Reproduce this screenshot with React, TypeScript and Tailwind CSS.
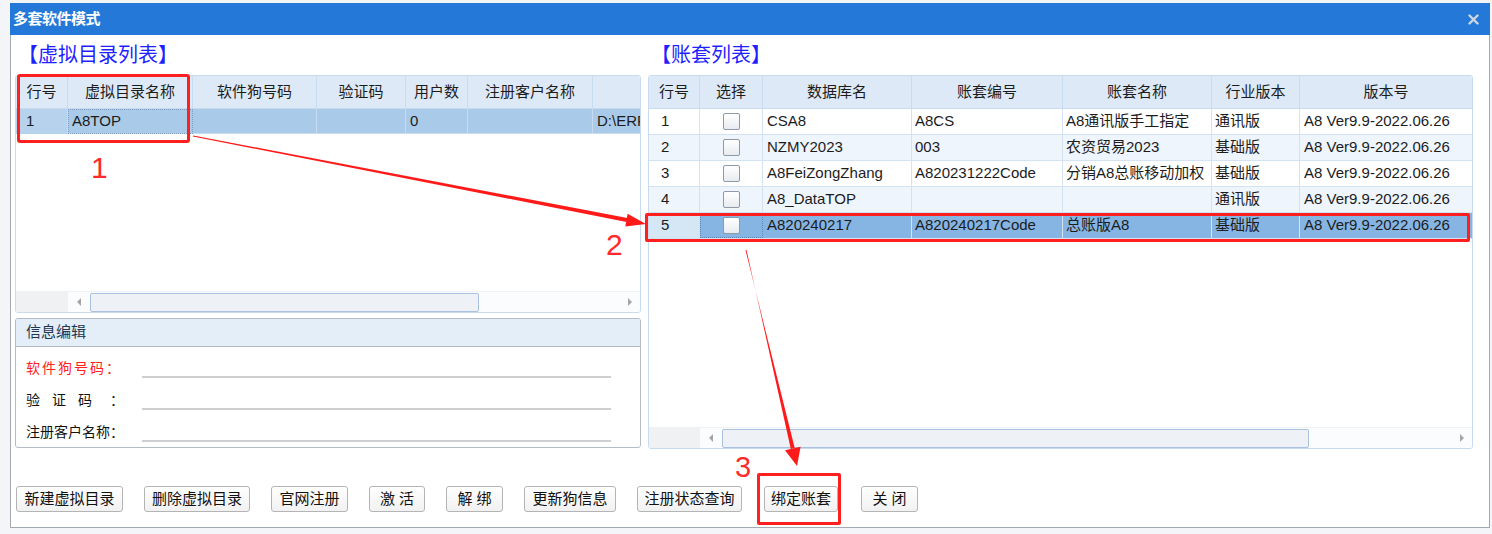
import React from "react";

const leftCols = "grid grid-cols-[52px_125px_124px_89px_62px_125px_1fr]";
const rightCols = "grid grid-cols-[51px_63px_149px_151px_149px_88px_1fr]";

const rightRows = [
  ["1", "CSA8", "A8CS", "A8通讯版手工指定", "通讯版", "A8 Ver9.9-2022.06.26"],
  ["2", "NZMY2023", "003", "农资贸易2023", "基础版", "A8 Ver9.9-2022.06.26"],
  ["3", "A8FeiZongZhang", "A820231222Code", "分销A8总账移动加权", "基础版", "A8 Ver9.9-2022.06.26"],
  ["4", "A8_DataTOP", "", "", "通讯版", "A8 Ver9.9-2022.06.26"],
  ["5", "A820240217", "A820240217Code", "总账版A8", "基础版", "A8 Ver9.9-2022.06.26"],
];

function HeadCell({ children }: { children?: React.ReactNode }) {
  return (
    <div className="flex items-center justify-center border-r border-[#c9dbef] whitespace-nowrap overflow-hidden">
      {children}
    </div>
  );
}

function Checkbox() {
  return (
    <div className="w-[17px] h-[17px] rounded-[2px] border border-[#8e9aa8] bg-gradient-to-b from-[#ffffff] to-[#e8ecf0]" />
  );
}

function ScrollBar({ corner, thumb }: { corner: string; thumb: string }) {
  return (
    <div className="h-[21px] flex shrink-0">
      <div className={`${corner} bg-[#f0f1f2]`} />
      <div className="flex-1 flex items-center bg-[#fbfcfd] border-t border-[#eef2f6]">
        <div className="w-[22px] flex items-center justify-center">
          <div className="w-0 h-0 border-y-[4px] border-y-transparent border-r-[4px] border-r-[#a6a6a6]" />
        </div>
        <div className={`${thumb} h-[19px] rounded-[2px] border border-[#a9c0de] bg-[#eef2f6]`} />
        <div className="flex-1" />
        <div className="w-[20px] flex items-center justify-center">
          <div className="w-0 h-0 border-y-[4px] border-y-transparent border-l-[4px] border-l-[#a6a6a6]" />
        </div>
      </div>
    </div>
  );
}

function Btn({ children, w }: { children: React.ReactNode; w: string }) {
  return (
    <div
      className={`${w} h-[26px] flex items-center justify-center rounded-[3px] border border-[#b4b4b4] bg-gradient-to-b from-[#ffffff] to-[#f1f1f1] text-[15px] text-[#111] whitespace-pre`}
    >
      {children}
    </div>
  );
}

export default function App() {
  return (
    <div className="relative w-[1492px] h-[534px] overflow-hidden bg-[#f3f5f8] pl-[10px] pt-[3px] font-['Liberation_Sans','Noto_Sans_CJK_SC',sans-serif]">
      <div className="w-[1480px] h-[525px] flex flex-col bg-white border-x border-b border-[#a3a9b0]">
        {/* Title bar */}
        <div className="h-[32px] shrink-0 bg-[#2479d8] flex items-center justify-between pl-[3px] pr-[11px] -mx-px">
          <span className="text-[15px] font-bold text-white tracking-[-0.5px]">多套软件模式</span>
          <svg width="11" height="11" viewBox="0 0 11 11">
            <path d="M1.5 1.5 L9.5 9.5 M9.5 1.5 L1.5 9.5" stroke="#cdd7e3" strokeWidth="2.4" strokeLinecap="round" />
          </svg>
        </div>

        {/* Body */}
        <div className="flex-1 flex flex-col pl-[4px] pr-[16px]">
          <div className="flex gap-[7px]">
            {/* Left column */}
            <div className="w-[626px] flex flex-col">
              <div className="h-[40px] flex items-center pl-[3px] text-[20px] text-[#1f1fff]">【虚拟目录列表】</div>
              <div className="h-[238px] flex flex-col border border-[#c9dbef] rounded-[3px] overflow-hidden bg-white text-[15px] text-[#1c1c1c]">
                <div className={`${leftCols} h-[33px] shrink-0 bg-[#dde9f7] border-b border-[#c9dbef]`}>
                  <HeadCell>行号</HeadCell>
                  <HeadCell>虚拟目录名称</HeadCell>
                  <HeadCell>软件狗号码</HeadCell>
                  <HeadCell>验证码</HeadCell>
                  <HeadCell>用户数</HeadCell>
                  <HeadCell>注册客户名称</HeadCell>
                  <div />
                </div>
                <div className={`${leftCols} h-[25px] shrink-0 bg-[#a9cbe9] border-b border-[#c9dbef]`}>
                  <div className="flex items-center pl-[10px] bg-[#b6d2ec] border-r border-[#c9dbef]">1</div>
                  <div className="flex items-center pl-[3px] border border-dotted border-[#7d9cc0]">A8TOP</div>
                  <div className="border-r border-[#c9dbef]" />
                  <div className="border-r border-[#c9dbef]" />
                  <div className="flex items-center pl-[4px] border-r border-[#c9dbef]">0</div>
                  <div className="border-r border-[#c9dbef]" />
                  <div className="flex items-center pl-[4px] whitespace-nowrap overflow-hidden">D:\ERP</div>
                </div>
                <div className="flex-1" />
                <ScrollBar corner="w-[52px]" thumb="w-[389px]" />
              </div>

              {/* Info panel */}
              <div className="mt-[5px] h-[130px] flex flex-col border border-[#b6bcc4] rounded-[3px] overflow-hidden">
                <div className="h-[28px] shrink-0 flex items-center pl-[10px] bg-[#e3eef9] border-b border-[#b0b8c2] text-[15px] text-[#22374f]">
                  信息编辑
                </div>
                <div className="flex-1 flex flex-col text-[14px]">
                  <div className="h-[31px] flex items-end">
                    <div className="w-[126px] pl-[10px] leading-[20px] text-[#ff2020] tracking-[2px]">软件狗号码：</div>
                    <div className="flex-1 mr-[29px] h-[2px] bg-[#cfcfcf]" />
                  </div>
                  <div className="h-[32px] flex items-end">
                    <div className="w-[126px] pl-[10px] leading-[20px] text-[#111]">
                      <div className="w-[98px] flex justify-between">
                        <span>验</span>
                        <span>证</span>
                        <span>码</span>
                        <span className="pl-[6px]">：</span>
                      </div>
                    </div>
                    <div className="flex-1 mr-[29px] h-[2px] bg-[#cfcfcf]" />
                  </div>
                  <div className="h-[32px] flex items-end">
                    <div className="w-[126px] pl-[10px] leading-[20px] text-[#111] whitespace-nowrap">注册客户名称：</div>
                    <div className="flex-1 mr-[29px] h-[2px] bg-[#cfcfcf]" />
                  </div>
                </div>
              </div>
            </div>

            {/* Right column */}
            <div className="w-[825px] flex flex-col">
              <div className="h-[40px] flex items-center pl-[3px] text-[20px] text-[#1f1fff]">【账套列表】</div>
              <div className="h-[374px] flex flex-col border border-[#c9dbef] rounded-[3px] overflow-hidden bg-white text-[15px] text-[#1c1c1c]">
                <div className={`${rightCols} h-[33px] shrink-0 bg-[#dde9f7] border-b border-[#c9dbef]`}>
                  <HeadCell>行号</HeadCell>
                  <HeadCell>选择</HeadCell>
                  <HeadCell>数据库名</HeadCell>
                  <HeadCell>账套编号</HeadCell>
                  <HeadCell>账套名称</HeadCell>
                  <HeadCell>行业版本</HeadCell>
                  <div className="flex items-center justify-center">版本号</div>
                </div>
                {rightRows.map((r, i) => {
                  const sel = i === 4;
                  const rowBg = sel ? "bg-[#86b5e3]" : i % 2 === 1 ? "bg-[#eef5fd]" : "bg-white";
                  return (
                    <div key={i} className={`${rightCols} h-[26px] shrink-0 ${rowBg} border-b border-[#d3e3f3]`}>
                      <div className={`flex items-center pl-[12px] border-r border-[#d3e3f3] ${sel ? "bg-[#d5e6f4]" : ""}`}>{r[0]}</div>
                      <div className={`flex items-center justify-center ${sel ? "border border-dotted border-[#5d86b4]" : "border-r border-[#d3e3f3]"}`}>
                        <Checkbox />
                      </div>
                      <div className="flex items-center pl-[4px] border-r border-[#d3e3f3] whitespace-nowrap overflow-hidden">{r[1]}</div>
                      <div className="flex items-center pl-[3px] border-r border-[#d3e3f3] whitespace-nowrap overflow-hidden">{r[2]}</div>
                      <div className="flex items-center pl-[3px] border-r border-[#d3e3f3] whitespace-nowrap overflow-hidden">{r[3]}</div>
                      <div className="flex items-center pl-[3px] border-r border-[#d3e3f3] whitespace-nowrap overflow-hidden">{r[4]}</div>
                      <div className="flex items-center pl-[4px] whitespace-nowrap overflow-hidden">{r[5]}</div>
                    </div>
                  );
                })}
                <div className="flex-1" />
                <ScrollBar corner="w-[51px]" thumb="w-[587px]" />
              </div>
            </div>
          </div>

          {/* Buttons */}
          <div className="mt-[37px] pl-[1px] flex gap-[21px]">
            <Btn w="w-[107px]">新建虚拟目录</Btn>
            <Btn w="w-[106px]">删除虚拟目录</Btn>
            <Btn w="w-[77px]">官网注册</Btn>
            <Btn w="w-[56px]">激 活</Btn>
            <Btn w="w-[57px]">解 绑</Btn>
            <Btn w="w-[92px]">更新狗信息</Btn>
            <Btn w="w-[105px]">注册状态查询</Btn>
            <div className="ml-[1px]">
              <Btn w="w-[74px]">绑定账套</Btn>
            </div>
            <div className="ml-[2px]">
              <Btn w="w-[57px]">关 闭</Btn>
            </div>
          </div>
        </div>
      </div>

      {/* Red annotations overlay */}
      <div className="absolute left-[17px] top-[74px] w-[173px] h-[69px] border-[3px] border-[#ff1f1f] rounded-[3px]" />
      <div className="absolute left-[645px] top-[213px] w-[825px] h-[29px] border-[3px] border-[#ff1f1f] rounded-[2px]" />
      <div className="absolute left-[757px] top-[473px] w-[84px] h-[52px] border-[3px] border-[#ff1f1f] rounded-[2px]" />
      <div className="absolute left-[91px] top-[153px] text-[30px] leading-none text-[#ff2b2b]">1</div>
      <div className="absolute left-[606px] top-[230px] text-[30px] leading-none text-[#ff2b2b]">2</div>
      <div className="absolute left-[735px] top-[453px] text-[29px] leading-none text-[#ff2b2b]">3</div>
      <svg className="absolute left-0 top-0 pointer-events-none" width="1492" height="534" viewBox="0 0 1492 534">
        <polygon points="193.1,135.5 627.4,218.0 626.6,222.0 192.9,136.5" fill="#ff1a1a" />
        <polygon points="646,224 625.3,226.6 627.6,213.8" fill="#ff1a1a" />
        <polygon points="745.5,250.1 794.7,448.0 790.8,449.0 746.5,249.9" fill="#ff1a1a" />
        <polygon points="797,466 785.0,450.3 800.6,446.7" fill="#ff1a1a" />
      </svg>
    </div>
  );
}
